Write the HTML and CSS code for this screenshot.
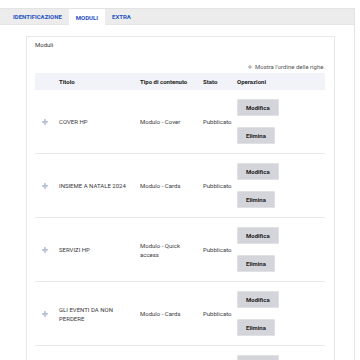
FILE: index.html
```html
<!DOCTYPE html>
<html lang="it">
<head>
  <meta charset="UTF-8">
  <meta name="viewport" content="width=device-width, initial-scale=1.0">
  <title>Moduli</title>
  <link rel="stylesheet" href="styles.css">
</head>
<body>
  <div class="card">
    <div class="tabs">
      <a class="tab">IDENTIFICAZIONE</a>
      <a class="tab active">MODULI</a>
      <a class="tab">EXTRA</a>
    </div>
    <div class="pane">
      <div class="fieldset">
        <div class="legend">Moduli</div>
        <div class="toggle"><svg class="toggle-icon" viewBox="0 0 8 8"><circle cx="4" cy="4" r="2.6" fill="none" stroke="#666" stroke-width="1"/><circle cx="4" cy="4" r="1" fill="#666"/></svg>Mostra l'ordine delle righe.</div>
        <table class="modules">
          <colgroup>
            <col class="c-title"><col class="c-type"><col class="c-state"><col class="c-ops">
          </colgroup>
          <thead>
            <tr><th class="th-title">Titolo</th><th>Tipo di contenuto</th><th>Stato</th><th>Operazioni</th></tr>
          </thead>
          <tbody id="rows"></tbody>
        </table>
      </div>
    </div>
  </div>
  <script>
    // Righe dei moduli
    const modules = [
      { title: 'COVER HP', type: 'Modulo - Cover' },
      { title: 'INSIEME A NATALE 2024', type: 'Modulo - Cards' },
      { title: 'SERVIZI HP', type: 'Modulo - Quick access' },
      { title: 'GLI EVENTI DA NON PERDERE', type: 'Modulo - Cards' },
      { title: '', type: '' }
    ];
    const handle = '<svg class="handle" viewBox="0 0 12 12"><g fill="none" stroke="#6f7fa8" stroke-width="1.2"><path d="M6 1v10M1 6h10"/><path d="M4.3 2.7L6 1l1.7 1.7M4.3 9.3L6 11l1.7-1.7M2.7 4.3L1 6l1.7 1.7M9.3 4.3L11 6 9.3 7.7"/></g></svg>';
    const body = document.getElementById('rows');
    modules.forEach(m => {
      const tr = document.createElement('tr');
      tr.innerHTML = `
        <td><div class="title-cell">${handle}<span class="title">${m.title}</span></div></td>
        <td>${m.type}</td>
        <td>${m.title ? 'Pubblicato' : ''}</td>
        <td><div class="ops"><button class="btn">Modifica</button><button class="btn">Elimina</button></div></td>
      `;
      body.appendChild(tr);
    });
  </script>
</body>
</html>
```

FILE: styles.css
```css
body { margin: 0; background: #fff; font-family: Roboto, "Liberation Sans", Arial, sans-serif; font-size: 6px; line-height: 9px; color: #333; height: 360px; overflow: hidden; }
.card { margin-top: 8px; width: 354px; border-right: 1px solid #e3e3e3; border-top: 1px solid #e3e3e3; height: 400px; }
.tabs { display: flex; background: #ececec; height: 15px; padding-left: 6px; border-bottom: 1px solid #e6e6e6; }
.tab { display: flex; align-items: center; padding: 0 7px; font-weight: bold; color: #1f52c4; }
.tab.active { background: #fff; margin-bottom: -1px; }
.pane { padding: 11px 19px 0 26px; }
.fieldset { border: 1px solid #e8e8e8; padding: 3px 9px 0 8px; height: 360px; }
.legend { color: #333; }
.toggle { margin-top: 13px; text-align: right; color: #555; }
.toggle-icon { width: 4px; height: 4px; margin-right: 3px; }
.modules { width: 100%; border-collapse: collapse; table-layout: fixed; margin-top: 2px; }
.c-title { width: 100px; }
.c-type { width: 63px; }
.c-state { width: 34px; }
th { background: #f2f3f8; font-weight: bold; text-align: left; height: 17px; padding: 0 5px; color: #222; }
th.th-title { padding-left: 24px; }
td { padding: 9px 5px; border-bottom: 1px solid #e7e8ed; vertical-align: middle; color: #3a3a3a; }
.title-cell { display: flex; align-items: center; }
.handle { width: 6px; height: 6px; margin: 0 11px 0 2px; flex: none; }
.ops { display: flex; flex-direction: column; align-items: flex-start; gap: 11px; }
.btn { font: inherit; font-weight: bold; color: #222; background: #d4d5da; border: 1px solid #e0e1e5; border-radius: 1px; height: 17px; padding: 0 8px; }
```
